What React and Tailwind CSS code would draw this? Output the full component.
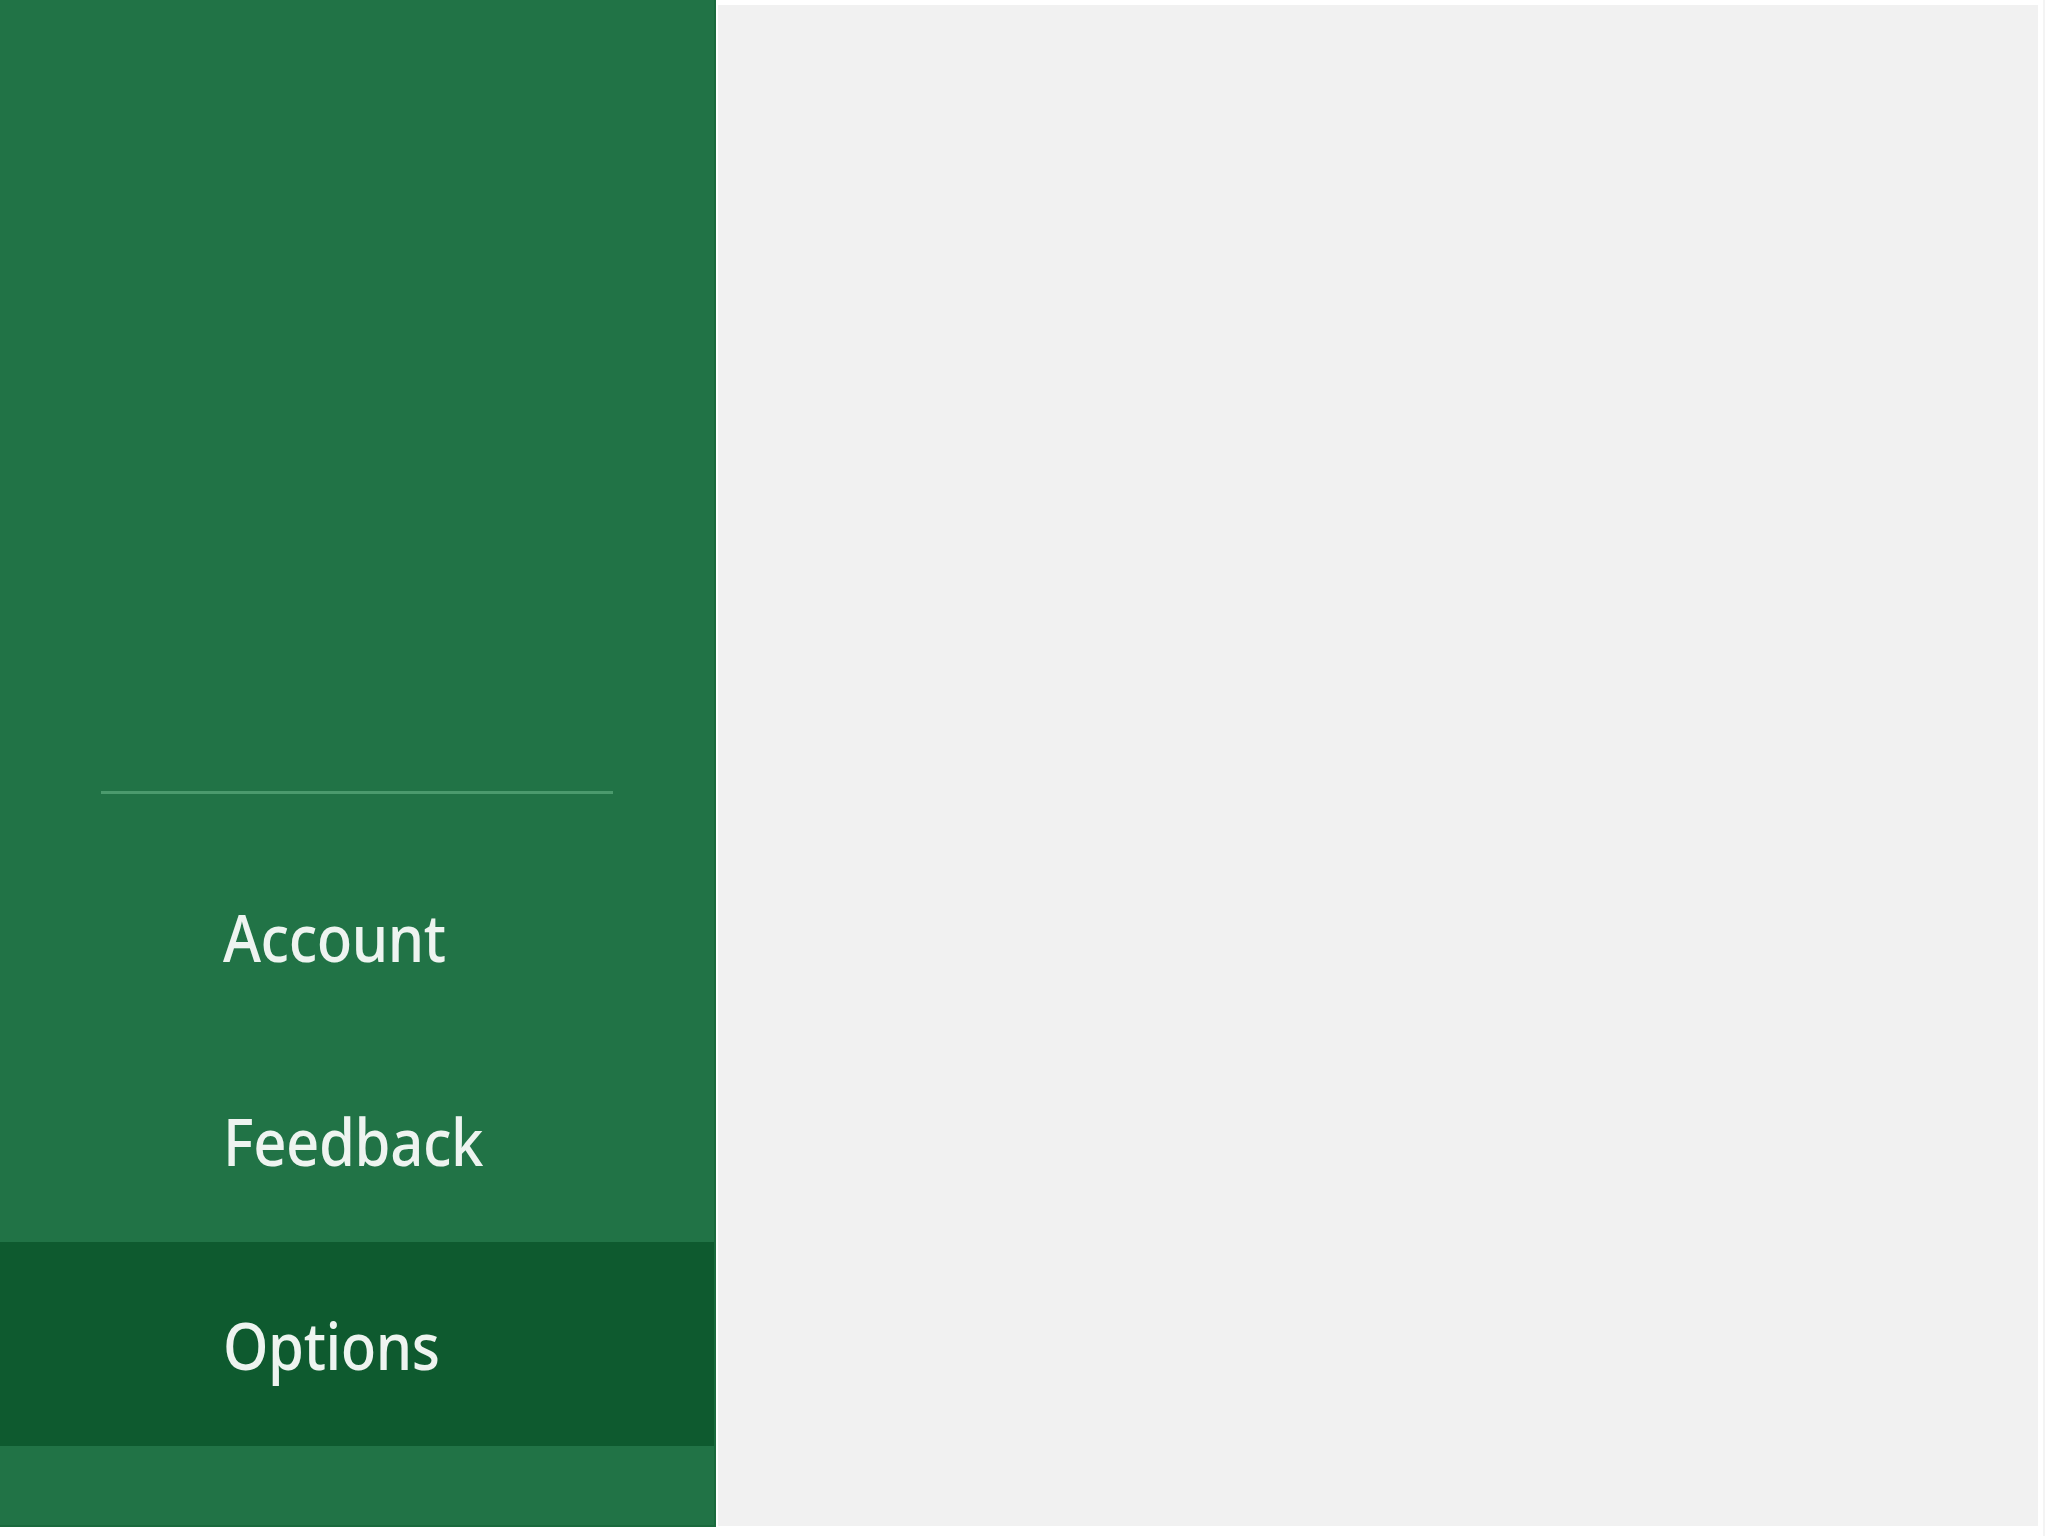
import React from 'react';

const navItems = [
  { label: 'Account', active: false },
  { label: 'Feedback', active: false },
  { label: 'Options', active: true }
];

const NavItem = ({ label, active }) => (
  <div
    className={`h-[204px] flex items-center pl-[223px] ${active ? 'bg-[#0e5a2f]' : 'bg-transparent'}`}
  >
    <span className="inline-block origin-left scale-x-[0.88] text-[66px] leading-none font-medium text-[#eef4f0] font-['Noto_Sans',sans-serif] tracking-[-0.5px]">
      {label}
    </span>
  </div>
);

const App = () => {
  return (
    <div className="w-[2048px] h-[1536px] bg-white flex overflow-hidden">
      <aside className="w-[716px] h-[1527px] shrink-0 bg-[#217346] border-r-2 border-b-2 border-[#1a6a3d] flex flex-col justify-end pb-[79px]">
        <div className="mx-[101px] h-[3px] bg-[#4b9a6d] mb-[40px]" />
        {navItems.map((item) => (
          <NavItem key={item.label} label={item.label} active={item.active} />
        ))}
      </aside>

      <div className="flex-1 flex">
        <main className="flex-1 mt-[5px] mb-[10px] ml-[2px] bg-[#f1f1f1]" />
        <div className="w-[10px] flex">
          <div className="w-[5px]" />
          <div className="w-[2px] bg-[#f4f4f4]" />
        </div>
      </div>
    </div>
  );
};

export default App;
